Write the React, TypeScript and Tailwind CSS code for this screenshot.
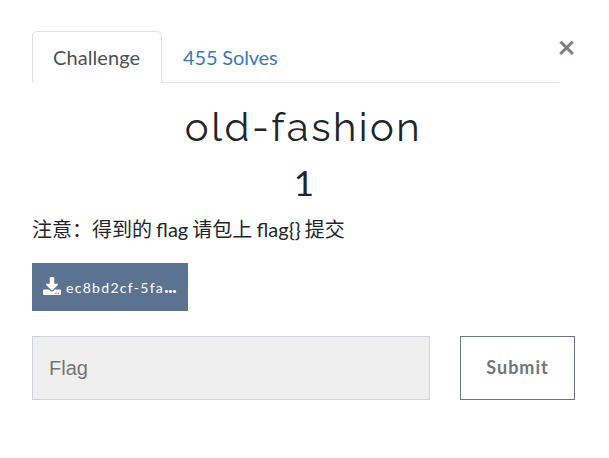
import React from "react";
import { FaDownload } from "react-icons/fa";

export default function App() {
  return (
    <main className="h-[458px] w-[609px] overflow-hidden bg-white pl-8 pr-[34px] pt-[31px] font-[Lato,'Noto_Sans_CJK_SC',sans-serif] text-[20px] text-[#212529]">
      <header className="flex">
        <nav className="flex h-[52px] w-[527px] border-b border-[#dee2e6] leading-[30px]">
          <a className="h-[52px] w-[130px] rounded-t-[5px] border border-b-0 border-[#dee2e6] bg-white pl-5 pt-[10px] tracking-[0.08px] text-[#495057]">Challenge</a>
          <a className="pl-[21px] pt-[11px] tracking-[-0.15px] text-[#3b78b8]">455 Solves</a>
        </nav>
        <button className="-ml-[1.5px] -mt-[2px] h-[34px] w-4 text-[31px] font-bold leading-[34px] text-[#7f7f7f]">×</button>
      </header>
      <h2 className="mt-[20px] text-center font-[Raleway,Lato,sans-serif] text-[40px] leading-[48px] tracking-[2.5px]">old-fashion</h2>
      <h3 className="mt-[7px] pl-px text-center text-[35px] leading-[48px]">1</h3>
      <p className="mt-[8px] leading-[30px] [word-spacing:-1px]">注意：得到的 flag 请包上 flag{"{}"} 提交</p>
      <button className="mt-[19px] flex h-12 w-[156px] items-center bg-[#5b7290] pl-[11px] text-white">
        <FaDownload className="-mt-[2px] h-[18px] w-[18px]" />
        <small className="ml-[5px] whitespace-nowrap text-[14px] leading-5 tracking-[1.3px]">ec8bd2cf-5fa<b className="text-[18px] font-black leading-none tracking-[-0.2px]">...</b></small>
      </button>
      <form className="mt-[25px] flex gap-[30px]">
        <input placeholder="Flag" className="h-16 w-[398px] border border-[#ced4da] bg-[#efefef] px-4 font-['Liberation_Sans',sans-serif] text-[20px] placeholder:text-[#757575]" />
        <button className="h-16 w-[115px] border border-[#6c757d] pb-[2px] text-[18px] font-bold tracking-[1px] text-[#6c757d]">Submit</button>
      </form>
    </main>
  );
}
